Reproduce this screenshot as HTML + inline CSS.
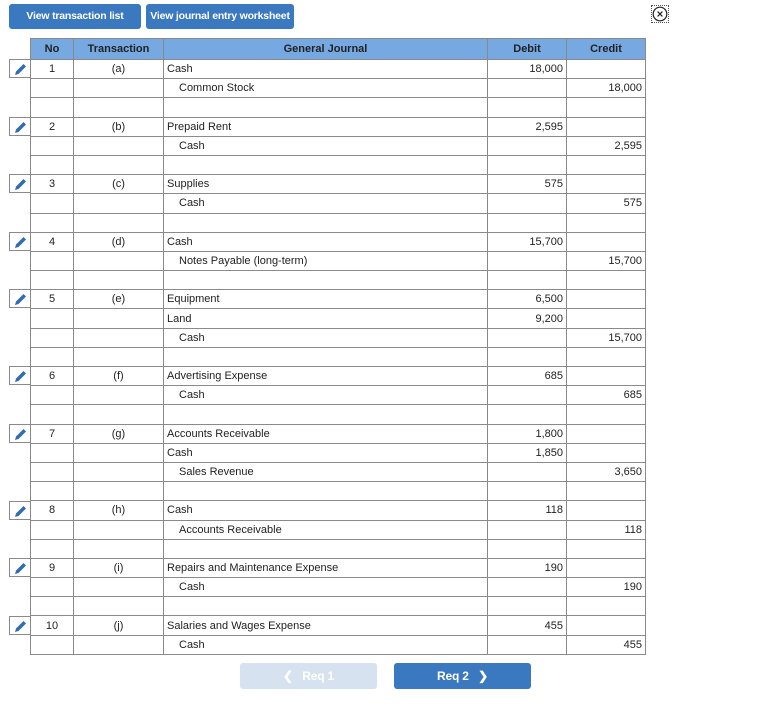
<!DOCTYPE html>
<html><head><style>
body{margin:0;width:767px;height:710px;background:#fff;font-family:"Liberation Sans",Arial,sans-serif;position:relative;overflow:hidden}
.btn{position:absolute;background:#3a78c0;color:#fff;font-weight:bold;font-size:10.5px;border-radius:3px;text-align:center;line-height:25px;height:25px;top:4px;white-space:nowrap;letter-spacing:-0.2px}
table{position:absolute;left:30px;top:38px;border-collapse:collapse;font-size:11px;color:#222;table-layout:fixed;width:615px}
td,th{border:1px solid #8a8a8a;padding:0 3px;white-space:nowrap;overflow:hidden}
tr{height:19.2px}
tr.h{height:21px}
th{background:#76a9e2;font-weight:bold;color:#222;font-size:11px}
td.c{text-align:center}td.r{text-align:right}td.i{padding-left:15px}
.pen{position:absolute;left:9px;width:21px;height:19px;border:1px solid #8a8a8a;border-right:none;box-sizing:border-box}
.x{position:absolute;left:651px;top:5px;width:18px;height:18px;border:1px dotted #555;box-sizing:border-box}
</style></head><body>
<div class="btn" style="left:9px;width:132px">View transaction list</div>
<div class="btn" style="left:146px;width:148px">View journal entry worksheet</div>
<div class="x"><svg width="16" height="16" viewBox="0 0 16 16"><circle cx="8" cy="8" r="6.8" fill="none" stroke="#222" stroke-width="1.2"/><path d="M5.6 5.6L10.4 10.4M10.4 5.6L5.6 10.4" stroke="#222" stroke-width="1.2"/></svg></div>
<table>
<colgroup><col style="width:43px"><col style="width:90px"><col style="width:324px"><col style="width:79px"><col style="width:79px"></colgroup>
<tr class="h"><th>No</th><th>Transaction</th><th>General Journal</th><th>Debit</th><th>Credit</th></tr>
<tr><td class="c">1</td><td class="c">(a)</td><td>Cash</td><td class="r">18,000</td><td></td></tr>
<tr><td></td><td></td><td class="i">Common Stock</td><td></td><td class="r">18,000</td></tr>
<tr><td></td><td></td><td></td><td></td><td></td></tr>
<tr><td class="c">2</td><td class="c">(b)</td><td>Prepaid Rent</td><td class="r">2,595</td><td></td></tr>
<tr><td></td><td></td><td class="i">Cash</td><td></td><td class="r">2,595</td></tr>
<tr><td></td><td></td><td></td><td></td><td></td></tr>
<tr><td class="c">3</td><td class="c">(c)</td><td>Supplies</td><td class="r">575</td><td></td></tr>
<tr><td></td><td></td><td class="i">Cash</td><td></td><td class="r">575</td></tr>
<tr><td></td><td></td><td></td><td></td><td></td></tr>
<tr><td class="c">4</td><td class="c">(d)</td><td>Cash</td><td class="r">15,700</td><td></td></tr>
<tr><td></td><td></td><td class="i">Notes Payable (long-term)</td><td></td><td class="r">15,700</td></tr>
<tr><td></td><td></td><td></td><td></td><td></td></tr>
<tr><td class="c">5</td><td class="c">(e)</td><td>Equipment</td><td class="r">6,500</td><td></td></tr>
<tr><td></td><td></td><td>Land</td><td class="r">9,200</td><td></td></tr>
<tr><td></td><td></td><td class="i">Cash</td><td></td><td class="r">15,700</td></tr>
<tr><td></td><td></td><td></td><td></td><td></td></tr>
<tr><td class="c">6</td><td class="c">(f)</td><td>Advertising Expense</td><td class="r">685</td><td></td></tr>
<tr><td></td><td></td><td class="i">Cash</td><td></td><td class="r">685</td></tr>
<tr><td></td><td></td><td></td><td></td><td></td></tr>
<tr><td class="c">7</td><td class="c">(g)</td><td>Accounts Receivable</td><td class="r">1,800</td><td></td></tr>
<tr><td></td><td></td><td>Cash</td><td class="r">1,850</td><td></td></tr>
<tr><td></td><td></td><td class="i">Sales Revenue</td><td></td><td class="r">3,650</td></tr>
<tr><td></td><td></td><td></td><td></td><td></td></tr>
<tr><td class="c">8</td><td class="c">(h)</td><td>Cash</td><td class="r">118</td><td></td></tr>
<tr><td></td><td></td><td class="i">Accounts Receivable</td><td></td><td class="r">118</td></tr>
<tr><td></td><td></td><td></td><td></td><td></td></tr>
<tr><td class="c">9</td><td class="c">(i)</td><td>Repairs and Maintenance Expense</td><td class="r">190</td><td></td></tr>
<tr><td></td><td></td><td class="i">Cash</td><td></td><td class="r">190</td></tr>
<tr><td></td><td></td><td></td><td></td><td></td></tr>
<tr><td class="c">10</td><td class="c">(j)</td><td>Salaries and Wages Expense</td><td class="r">455</td><td></td></tr>
<tr><td></td><td></td><td class="i">Cash</td><td></td><td class="r">455</td></tr>
</table>
<div id="pens"></div>
<script>
var starts=[0,3,6,9,12,16,19,23,26,29],h="";
starts.forEach(function(s){var t=59+s*19.2;h+='<div class="pen" style="top:'+t+'px"><svg width="20" height="18" viewBox="0 0 20 18"><path d="M5 15L6 11.5L13.5 4L16 6.5L8.5 14Z" fill="#2f6db5"/></svg></div>';});
document.getElementById("pens").innerHTML=h;
</script>
<div class="btn" style="left:240px;top:663px;width:137px;height:26px;line-height:26px;background:#d6e2f0;color:#fff;font-size:12px">&#10094;&nbsp;&nbsp;&nbsp;Req 1</div>
<div class="btn" style="left:394px;top:663px;width:137px;height:26px;line-height:26px;font-size:12px">Req 2&nbsp;&nbsp;&nbsp;&#10095;</div>
</body></html>
